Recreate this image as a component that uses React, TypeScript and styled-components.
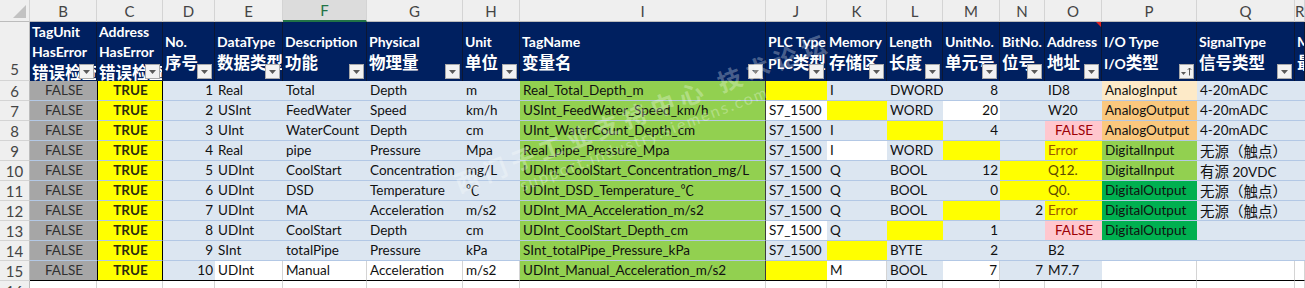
import React from 'react';
import styled, { createGlobalStyle, css } from 'styled-components';

const GlobalStyle = createGlobalStyle`
  html, body {
    margin: 0;
    padding: 0;
    background: #ffffff;
    overflow: hidden;
  }
  body {
    font-family: 'Lato', 'Noto Sans CJK SC', sans-serif;
  }
`;

// column widths: row header, then B .. R
const COLUMNS = '30px 67px 66px 52px 68px 84px 96px 57px 246px 61px 60px 56px 57px 45px 57px 95px 98px 1fr';

const FILLS = {
    blue: '#dce6f1',
    white: '#ffffff',
    none: '#ffffff',
    yellow: '#ffff00',
    grey: '#a6a6a6',
    green: '#92d050',
    pink: '#ffc7ce',
    peach: '#fdeac8',
    orange: '#fac87e',
    dgreen: '#00b050',
};

type Fill = keyof typeof FILLS;

type CellSpec = {
    v?: string;
    fill: Fill;
    align?: 'left' | 'right' | 'center';
    bold?: boolean;
    ink?: string;
};

const Sheet = styled.div`
    position: relative;
    width: 1305px;
    height: 288px;
    overflow: hidden;
    font-size: 13.5px;
    color: #111111;
`;

const Row = styled.div<{ $h: number }>`
    display: grid;
    grid-template-columns: ${COLUMNS};
    height: ${p => p.$h}px;
`;

const Letter = styled.div<{ $active?: boolean }>`
    display: flex;
    align-items: center;
    justify-content: center;
    box-sizing: border-box;
    background: #efefef;
    color: #444444;
    font-size: 15px;
    border-right: 1px solid #d4d4d4;
    border-bottom: 1px solid #bcbcbc;

    ${p => p.$active && css`
        background: #dcdcdc;
        color: #217346;
        border-bottom: 2px solid #217346;
    `}
`;

const Corner = styled(Letter)`
    position: relative;

    &::after {
        content: '';
        position: absolute;
        right: 3px;
        bottom: 3px;
        border-left: 13px solid transparent;
        border-bottom: 13px solid #c2c2c2;
    }
`;

const RowNum = styled.div<{ $bottom?: boolean }>`
    display: flex;
    align-items: ${p => (p.$bottom ? 'flex-end' : 'center')};
    justify-content: center;
    box-sizing: border-box;
    padding-bottom: ${p => (p.$bottom ? '2px' : '0')};
    background: #efefef;
    color: #444444;
    font-size: 15px;
    border-right: 1px solid #bcbcbc;
    border-bottom: 1px solid #d4d4d4;
`;

const HeadCell = styled.div`
    position: relative;
    display: flex;
    flex-direction: column;
    justify-content: center;
    box-sizing: border-box;
    padding: 3px 2px 0;
    background: #002060;
    color: #ffffff;
    font-weight: 700;
    font-size: 14px;
    line-height: 20px;
    white-space: nowrap;
    overflow: hidden;
    border-right: 1px solid #0c1733;
`;

const Han = styled.span<{ $size: number }>`
    font-family: 'Noto Sans CJK SC', sans-serif;
    font-size: ${p => p.$size}px;
`;

const FilterButton = styled.span`
    position: absolute;
    right: 2px;
    bottom: 2px;
    width: 15px;
    height: 15px;
    box-sizing: border-box;
    display: flex;
    align-items: center;
    justify-content: center;
    background: #f2f2f2;
    border: 1px solid #a9a9a9;
`;

const CommentMark = styled.span`
    position: absolute;
    top: 0;
    right: 0;
    border-left: 5px solid transparent;
    border-top: 5px solid #e02020;
`;

const DataCell = styled.div<{
    $fill: Fill;
    $align: string;
    $bold?: boolean;
    $ink?: string;
    $edge?: string;
    $last?: boolean;
}>`
    box-sizing: border-box;
    height: 20px;
    padding: 0 2px 0 3px;
    line-height: 19px;
    background: ${p => FILLS[p.$fill]};
    color: ${p => p.$ink || '#111111'};
    font-weight: ${p => (p.$bold ? 700 : 400)};
    text-align: ${p => p.$align};
    white-space: nowrap;
    overflow: hidden;
    border-bottom: 1px solid ${p => (p.$fill === 'none' ? '#d4d4d4' : '#b3c8e5')};
    ${p => p.$fill === 'none' && css`border-right: 1px solid #d4d4d4;`}
    ${p => p.$edge === 'box' && css`
        border-left: 1px solid #000000;
        border-right: 1px solid #000000;
    `}
    ${p => p.$edge === 'right' && css`border-right: 1px solid #3c3c3c;`}
    ${p => p.$last && css`border-bottom: 1px solid #000000;`}
`;

const BlankCell = styled.div`
    box-sizing: border-box;
    border-right: 1px solid #d4d4d4;
    border-bottom: 1px solid #d4d4d4;
`;

const Watermark = styled.div`
    position: absolute;
    left: 450px;
    top: 170px;
    transform: rotate(-21deg);
    transform-origin: left top;
    color: rgba(255, 255, 255, 0.3);
    pointer-events: none;
    white-space: nowrap;
    font-family: 'Noto Sans CJK SC', sans-serif;
`;

const WatermarkTitle = styled.div`
    font-size: 24px;
    font-weight: 700;
    letter-spacing: 6px;
    line-height: 30px;
`;

const WatermarkUrl = styled.div`
    font-family: 'Lato', sans-serif;
    font-size: 16px;
    letter-spacing: 2px;
    padding-left: 60px;
`;

const LETTERS = ['B', 'C', 'D', 'E', 'F', 'G', 'H', 'I', 'J', 'K', 'L', 'M', 'N', 'O', 'P', 'Q', 'R'];

const HEADERS: string[][] = [
    ['TagUnit', 'HasError', '错误检查'],
    ['Address', 'HasError', '错误检查'],
    ['No.', '序号'],
    ['DataType', '数据类型'],
    ['Description', '功能'],
    ['Physical', '物理量'],
    ['Unit', '单位'],
    ['TagName', '变量名'],
    ['PLC Type', 'PLC类型'],
    ['Memory', '存储区'],
    ['Length', '长度'],
    ['UnitNo.', '单元号'],
    ['BitNo.', '位号'],
    ['Address', '地址'],
    ['I/O Type', 'I/O类型'],
    ['SignalType', '信号类型'],
    ['Max', '最大值'],
];

const HAN = /([\u3000-\u9fff\uff00-\uffef]+)/;

const mixed = (text: string, size: number) =>
    text.split(HAN).map((part, i) =>
        HAN.test(part) ? <Han key={i} $size={size}>{part}</Han> : <React.Fragment key={i}>{part}</React.Fragment>
    );

// cell helpers
const t = (v: string, fill: Fill = 'blue'): CellSpec => ({ v, fill });
const n = (v: string, fill: Fill = 'blue'): CellSpec => ({ v, fill, align: 'right' });
const e = (fill: Fill = 'blue'): CellSpec => ({ fill });
const flagB: CellSpec = { v: 'FALSE', fill: 'grey', align: 'center', ink: '#303030' };
const flagC: CellSpec = { v: 'TRUE', fill: 'yellow', align: 'center', bold: true, ink: '#2a2a10' };
const bad: CellSpec = { v: 'FALSE', fill: 'pink', align: 'center', ink: '#9c0006' };
const warn = (v: string, ink = '#9c5700'): CellSpec => ({ v, fill: 'yellow', ink });

const ROWS: { num: number; cells: CellSpec[] }[] = [
    { num: 6, cells: [flagB, flagC, n('1'), t('Real'), t('Total'), t('Depth'), t('m'), t('Real_Total_Depth_m', 'green'), e('yellow'), t('I'), t('DWORD'), n('8'), e(), t('ID8'), t('AnalogInput', 'peach'), t('4-20mADC'), e()] },
    { num: 7, cells: [flagB, flagC, n('2'), t('USInt'), t('FeedWater'), t('Speed'), t('km/h'), t('USInt_FeedWater_Speed_km/h', 'green'), t('S7_1500', 'white'), e('yellow'), t('WORD'), n('20', 'white'), e(), t('W20'), t('AnalogOutput', 'orange'), t('4-20mADC'), e()] },
    { num: 8, cells: [flagB, flagC, n('3'), t('UInt'), t('WaterCount'), t('Depth'), t('cm'), t('UInt_WaterCount_Depth_cm', 'green'), t('S7_1500'), t('I'), e('yellow'), n('4'), e(), bad, t('AnalogOutput', 'orange'), t('4-20mADC'), e()] },
    { num: 9, cells: [flagB, flagC, n('4'), t('Real'), t('pipe'), t('Pressure'), t('Mpa'), t('Real_pipe_Pressure_Mpa', 'green'), t('S7_1500'), t('I', 'white'), t('WORD'), e('yellow'), e(), warn('Error'), t('DigitalInput', 'green'), t('无源（触点）'), e()] },
    { num: 10, cells: [flagB, flagC, n('5'), t('UDInt'), t('CoolStart'), t('Concentration'), t('mg/L'), t('UDInt_CoolStart_Concentration_mg/L', 'green'), t('S7_1500'), t('Q'), t('BOOL'), n('12'), e('yellow'), warn('Q12.', '#5e4a00'), t('DigitalInput', 'green'), t('有源 20VDC'), e()] },
    { num: 11, cells: [flagB, flagC, n('6'), t('UDInt'), t('DSD'), t('Temperature'), t('℃'), t('UDInt_DSD_Temperature_℃', 'green'), t('S7_1500'), t('Q'), t('BOOL'), n('0'), e('yellow'), warn('Q0.', '#5e4a00'), t('DigitalOutput', 'dgreen'), t('无源（触点）'), e()] },
    { num: 12, cells: [flagB, flagC, n('7'), t('UDInt'), t('MA'), t('Acceleration'), t('m/s2'), t('UDInt_MA_Acceleration_m/s2', 'green'), t('S7_1500'), t('Q'), t('BOOL'), e('yellow'), n('2'), warn('Error'), t('DigitalOutput', 'dgreen'), t('无源（触点）'), e()] },
    { num: 13, cells: [flagB, flagC, n('8'), t('UDInt'), t('CoolStart'), t('Depth'), t('cm'), t('UDInt_CoolStart_Depth_cm', 'green'), t('S7_1500', 'white'), t('Q'), e('yellow'), n('1'), e(), bad, t('DigitalOutput', 'dgreen'), e(), e()] },
    { num: 14, cells: [flagB, flagC, n('9'), t('SInt'), t('totalPipe'), t('Pressure'), t('kPa'), t('SInt_totalPipe_Pressure_kPa', 'green'), t('S7_1500'), e('yellow'), t('BYTE'), n('2'), e(), t('B2'), e(), e(), e()] },
    { num: 15, cells: [flagB, flagC, n('10'), t('UDInt', 'none'), t('Manual', 'none'), t('Acceleration', 'none'), t('m/s2', 'none'), t('UDInt_Manual_Acceleration_m/s2', 'green'), e('yellow'), t('M', 'none'), t('BOOL'), n('7', 'none'), n('7'), t('M7.7'), e('none'), e('none'), e('none')] },
];

const Caret = () => (
    <svg width="7" height="4" viewBox="0 0 7 4">
        <path d="M0 0 L7 0 L3.5 4 Z" fill="#5a5a5a" />
    </svg>
);

const SortCaret = () => (
    <svg width="11" height="9" viewBox="0 0 11 9">
        <path d="M0 5 L5 5 L2.5 8 Z" fill="#5a5a5a" />
        <path d="M8.5 1 L8.5 8.5 M6.8 2.8 L8.5 1 L10.2 2.8" stroke="#5a5a5a" strokeWidth="1" fill="none" />
    </svg>
);

const edgeFor = (col: number) => (col === 1 ? 'box' : col === 7 ? 'right' : undefined);

export default function App(): JSX.Element {
    return (
        <>
            <GlobalStyle />
            <Sheet>
                <Row $h={22}>
                    <Corner />
                    {LETTERS.map(l => (
                        <Letter key={l} $active={l === 'F'}>{l}</Letter>
                    ))}
                </Row>

                <Row $h={59}>
                    <RowNum $bottom>5</RowNum>
                    {HEADERS.map((lines, i) => (
                        <HeadCell key={i}>
                            {lines.map((line, j) => (
                                <div key={j}>{mixed(line, 16.5)}</div>
                            ))}
                            {i === 13 && <CommentMark />}
                            {i < 16 && (
                                <FilterButton>{i === 14 ? <SortCaret /> : <Caret />}</FilterButton>
                            )}
                        </HeadCell>
                    ))}
                </Row>

                {ROWS.map(row => (
                    <Row $h={20} key={row.num}>
                        <RowNum>{row.num}</RowNum>
                        {row.cells.map((c, i) => (
                            <DataCell
                                key={i}
                                $fill={c.fill}
                                $align={c.align || 'left'}
                                $bold={c.bold}
                                $ink={c.ink}
                                $edge={edgeFor(i)}
                                $last={row.num === 15}
                            >
                                {c.v ? mixed(c.v, 14.5) : null}
                            </DataCell>
                        ))}
                    </Row>
                ))}

                <Row $h={20}>
                    <RowNum>16</RowNum>
                    {LETTERS.map(l => (
                        <BlankCell key={l} />
                    ))}
                </Row>

                <Watermark>
                    <WatermarkTitle>西门子工业支持中心 技术论坛</WatermarkTitle>
                    <WatermarkUrl>support.industry.siemens.com</WatermarkUrl>
                </Watermark>
            </Sheet>
        </>
    );
}
